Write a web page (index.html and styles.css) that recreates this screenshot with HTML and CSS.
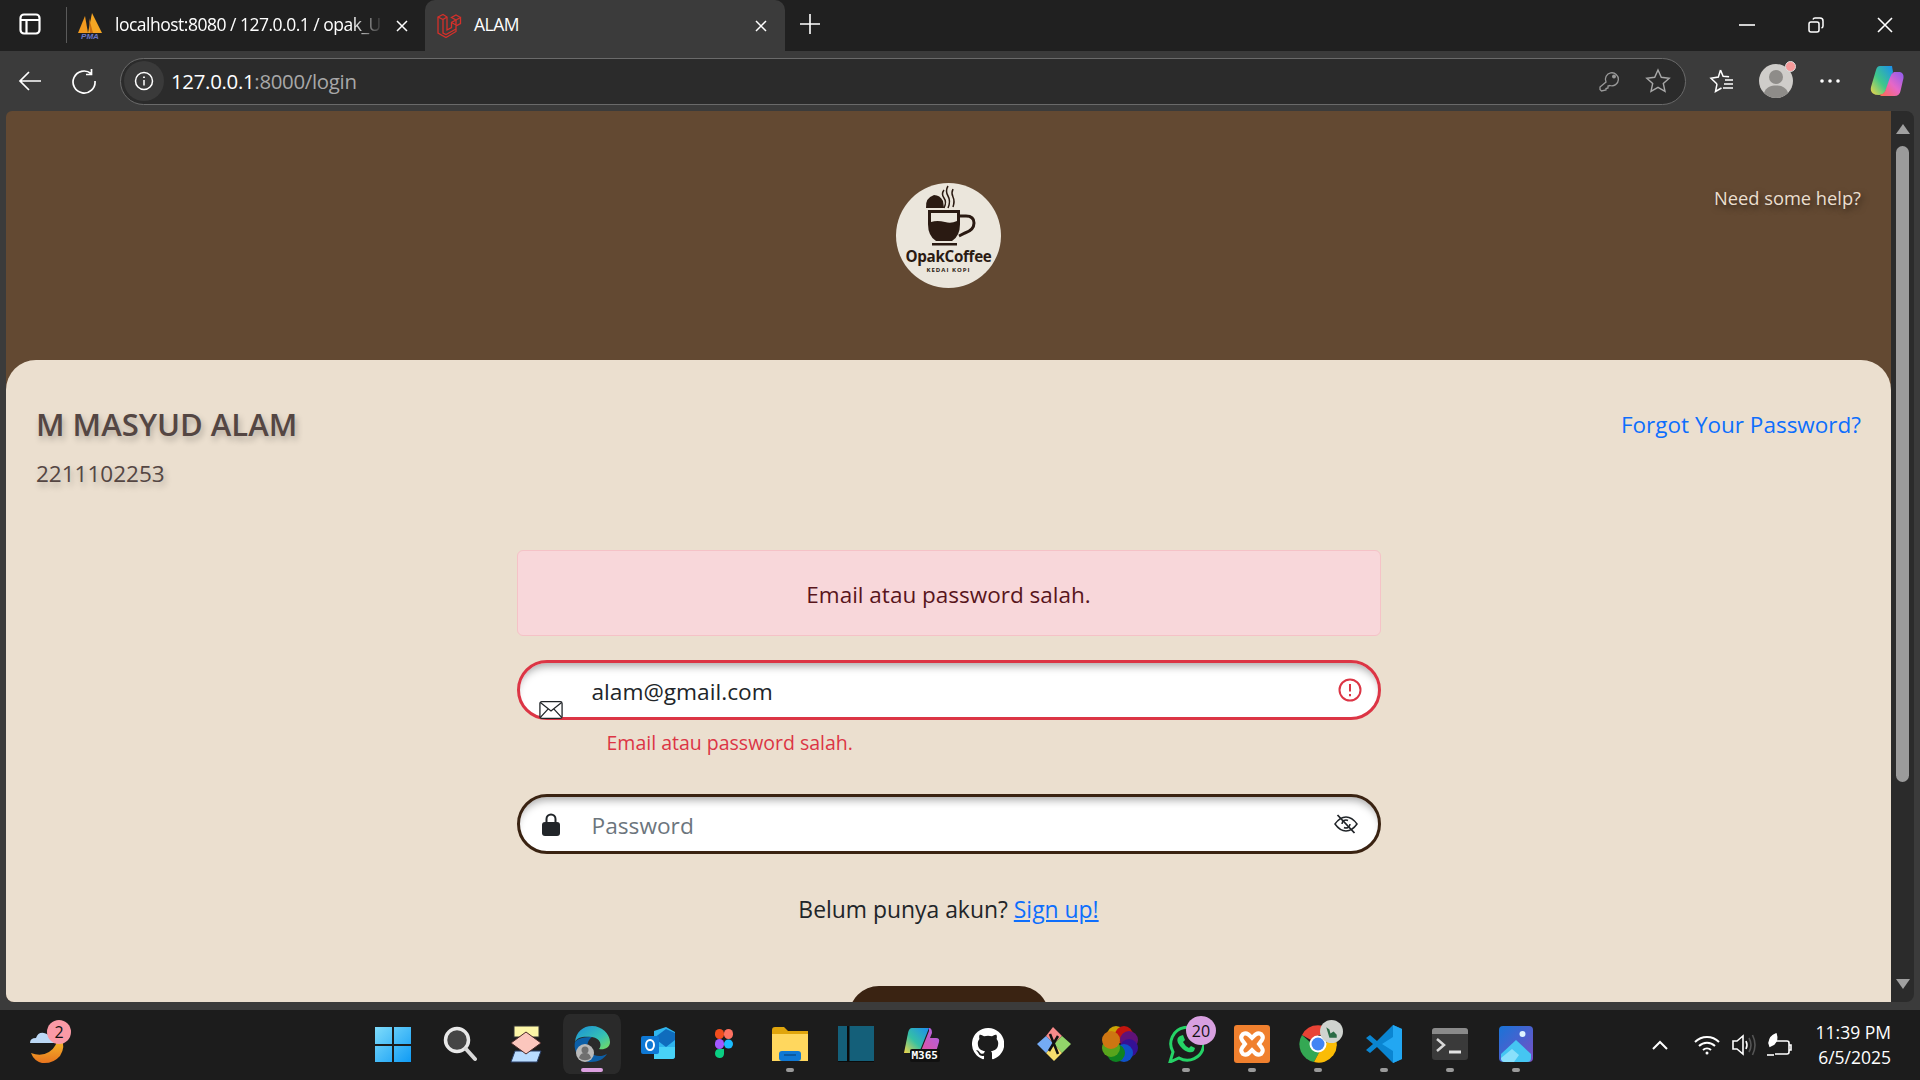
FILE: index.html
```html
<!DOCTYPE html>
<html lang="en">
<head>
  <meta charset="UTF-8" />
  <title>ALAM</title>
  <link rel="stylesheet" href="styles.css">
</head>
<body>
  <!-- Tab strip -->
  <div class="tabstrip">
    <svg class="tab-sidebar" width="22" height="22" viewBox="0 0 22 22" fill="none" stroke="#fff" stroke-width="2.200"><rect x="1.500" y="1.500" width="19" height="19" rx="3.500"/><path d="M1.500 7h19M7.500 7v13"/></svg>
    <div class="tab-sep"></div>
    <div class="tab">
      <svg width="26" height="28" viewBox="0 0 26 28"><path d="M1 21 8 4l3 17z" fill="#f29a1f"/><path d="M11 21 15 1l10 20z" fill="#f5a623"/><path d="M12 6l4 15h-3z" fill="#c96f12"/><text class="pma-text" x="13" y="27" text-anchor="middle">PMA</text></svg>
      <span class="tab-title fade">localhost:8080 / 127.0.0.1 / opak_U</span>
      <span class="tab-x"><svg width="12" height="12" viewBox="0 0 12 12" stroke="#fff" stroke-width="1.500"><path d="M1 1l10 10M11 1 1 11"/></svg></span>
    </div>
    <div class="tab active">
      <svg width="26" height="26" viewBox="0 0 26 26" fill="none" stroke="#d5302a" stroke-width="1.300"><path d="M2 4l5-2.500L11 4v13l4.500-2.500V9.500L20 7l4.500-2.500v6L20 13v5.500L10 24.500 2 20z"/><path d="M2 4l5 2.500L11 4M7 6.500V20l3 1.500 10-5.500M15.500 9.500 20 12V7M20 7l-4.500-2.500L20 2l4.500 2.500"/></svg>
      <span class="tab-title">ALAM</span>
      <span class="tab-x"><svg width="12" height="12" viewBox="0 0 12 12" stroke="#fff" stroke-width="1.500"><path d="M1 1l10 10M11 1 1 11"/></svg></span>
    </div>
    <svg class="tab-plus" width="22" height="22" viewBox="0 0 22 22" stroke="#fff" stroke-width="1.600"><path d="M11 1v20M1 11h20"/></svg>
    <div class="win-btns">
      <svg width="16" height="16" viewBox="0 0 16 16" stroke="#fff" stroke-width="1.600"><path d="M0 8h16"/></svg>
      <svg width="16" height="16" viewBox="0 0 16 16" fill="none" stroke="#fff" stroke-width="1.500"><rect x="1" y="5" width="10" height="10" rx="2"/><path d="M5 2.500Q5.500 1 7 1h5q3 0 3 3v5q0 1.500-1.500 2"/></svg>
      <svg width="16" height="16" viewBox="0 0 16 16" stroke="#fff" stroke-width="1.600"><path d="M1 1l14 14M15 1 1 15"/></svg>
    </div>
  </div>

  <!-- Address bar -->
  <div class="toolbar">
    <svg class="nav-btn" width="26" height="26" viewBox="0 0 26 26" fill="none" stroke="#fff" stroke-width="1.700"><path d="M24 13H3M12 4l-9 9 9 9"/></svg>
    <svg class="nav-btn" width="26" height="26" viewBox="0 0 26 26" fill="none" stroke="#fff" stroke-width="1.700"><path d="M20 5.500A11 11 0 1 0 24 13M20.500 1v5.500H15"/></svg>
    <div class="address">
      <span class="addr-info"><svg width="20" height="20" viewBox="0 0 20 20" fill="none" stroke="#fff" stroke-width="1.500"><circle cx="10" cy="10" r="8.500"/><path d="M10 9v5.500"/><path d="M10 5.500v1.500" stroke-width="1.800"/></svg></span>
      <span class="addr-host">127.0.0.1</span><span class="addr-path">:8000/login</span>
      <div class="addr-icons">
        <svg width="22" height="22" viewBox="0 0 22 22" fill="none" stroke="#9a9a9a" stroke-width="1.300"><path d="M8 12a6.500 6.500 0 1 1 4 3.500l-2 .5v2l-2 .5v1.500L3.500 21 2 19.500V17z"/><circle cx="16" cy="6.500" r="1.300" fill="#9a9a9a"/></svg>
        <svg width="26" height="26" viewBox="0 0 26 26" fill="none" stroke="#a8a8a8" stroke-width="1.400"><path d="M13 2l3.300 7.300 7.900.9-5.900 5.300 1.700 7.800L13 19.300 6 23.300l1.700-7.800L1.800 10.200l7.900-.9z"/></svg>
      </div>
    </div>
    <div class="tool-icons">
      <svg class="tool-fav" width="26" height="26" viewBox="0 0 26 26" fill="none" stroke="#fff" stroke-width="1.500"><path d="M11.500 2l2.600 6.300 6 .5M8 16l-1.500 7.500 6-3.500M8 16 2 10.300l7.300-1.200L11.500 2"/><path d="M16 12h8M15 16h9M14 20h10" stroke-width="1.300"/></svg>
      <span class="avatar"><svg width="34" height="34" viewBox="0 0 34 34"><circle cx="17" cy="17" r="17" fill="#cfcdca"/><circle cx="17" cy="13" r="7" fill="#8e8c89"/><path d="M5 29c2-6 7-7.500 12-7.500S27 23 29 29a17 17 0 0 1-24 0z" fill="#8e8c89"/></svg><i class="avatar-dot"></i></span>
      <svg class="tool-more" width="22" height="22" viewBox="0 0 22 22" fill="#fff"><circle cx="3" cy="11" r="1.800"/><circle cx="11" cy="11" r="1.800"/><circle cx="19" cy="11" r="1.800"/></svg>
      <svg class="tool-copilot" width="34" height="32" viewBox="0 0 34 32">
        <defs>
          <linearGradient id="cop1" x1="0" y1="1" x2="1" y2="0"><stop offset="0" stop-color="#f5d547"/><stop offset=".45" stop-color="#3fc88a"/><stop offset="1" stop-color="#1a8ef0"/></linearGradient>
          <linearGradient id="cop2" x1="0" y1="1" x2="1" y2="0"><stop offset="0" stop-color="#ff6a4d"/><stop offset=".5" stop-color="#e667c7"/><stop offset="1" stop-color="#8a5cf0"/></linearGradient>
        </defs>
        <path d="M10 1h12l1 6-7 18q-2 5-7 5-4 0-6-1.500Q0 26 1 22L6 5q1-4 4-4z" fill="url(#cop1)"/>
        <path d="M24 7h6q4 1 3.500 6l-3 13q-1 5-6 5H13q-3 0-3-1.500 3 0 5-3l5-14q1-4 4-5.500z" fill="url(#cop2)"/>
      </svg>
    </div>
  </div>

  <!-- Browser viewport -->
  <div class="viewport">
    <main class="page">
      <header class="page-head">
        <div></div>
        <svg class="logo" width="105" height="105" viewBox="0 0 105 105">
          <circle cx="52.500" cy="52.500" r="52.500" fill="#ebe6dc"/>
          <path d="M30 25q-1-10 8-13 6 0 9 6l1 7z" fill="#2a1a12"/>
          <path d="M48 7q-3 4 0 8t0 10M52 3q-3 5 0 10t0 12M57 6q-2 4 0 8t0 10" fill="none" stroke="#2a1a12" stroke-width="1.500"/>
          <path d="M32 27h32v14q0 12-8 17H40q-8-5-8-17z" fill="#2a1a12"/>
          <path d="M35 30h26v8q-6 3-12 1-8-2-14 0z" fill="#ebe6dc"/>
          <path d="M64 33h6q8 0 8 7t-9 10l-6 3" fill="none" stroke="#2a1a12" stroke-width="3"/>
          <rect x="36" y="60" width="25" height="2.500" fill="#2a1a12"/>
          <text class="logo-name" x="52.500" y="79" text-anchor="middle">OpakCoffee</text>
          <text class="logo-sub" x="52.500" y="89" text-anchor="middle">KEDAI KOPI</text>
        </svg>
        <a class="help-link">Need some help?</a>
      </header>

      <section class="card">
        <div class="card-top">
          <div>
            <h1 class="student-name">M MASYUD ALAM</h1>
            <p class="student-id">2211102253</p>
          </div>
          <a class="forgot-link">Forgot Your Password?</a>
        </div>

        <form class="login-form">
          <div class="alert">Email atau password salah.</div>

          <div class="field invalid">
            <svg class="field-icon mail" width="26" height="20" viewBox="0 0 26 20" fill="#fff" stroke="#212529" stroke-width="1.400"><rect x="1" y="1" width="24" height="18" rx="2"/><path d="M1.500 2 13 11 24.500 2M1.500 18 10 8.800M24.500 18 16 8.800" fill="none"/></svg>
            <input class="field-input" type="text" value="alam@gmail.com">
            <svg class="field-end" width="24" height="24" viewBox="0 0 24 24" fill="none" stroke="#dc3545" stroke-width="2"><circle cx="12" cy="12" r="10.500"/><path d="M12 6v7.500M12 16v2.200"/></svg>
          </div>
          <div class="field-error">Email atau password salah.</div>

          <div class="field">
            <svg class="field-icon" width="24" height="24" viewBox="0 0 24 24"><path d="M7.500 11V7a4.500 4.500 0 0 1 9 0v4" fill="none" stroke="#212529" stroke-width="2"/><rect x="3" y="10" width="18" height="14" rx="3" fill="#212529"/></svg>
            <input class="field-input" type="text" placeholder="Password">
            <svg class="field-end eye" width="24" height="20" viewBox="0 0 24 20" fill="none" stroke="#212529" stroke-width="1.500"><path d="M1 10Q6 3 12 3t11 7q-5 7-11 7T1 10z"/><path d="M8 10a4 4 0 0 1 6-3.500M16 10a4 4 0 0 1-6 3.500"/><path d="M3.500 1l17 18" stroke-width="1.800"/></svg>
          </div>

          <p class="signup">Belum punya akun? <a class="signup-link">Sign up!</a></p>
          <div class="submit"></div>
        </form>
      </section>
    </main>

    <div class="scrollbar">
      <i class="scroll-up"></i>
      <div class="scroll-thumb"></div>
      <i class="scroll-down"></i>
    </div>
  </div>

  <!-- Windows taskbar -->
  <footer class="taskbar">
    <div class="task-weather">
      <svg width="40" height="42" viewBox="0 0 40 42">
        <defs><linearGradient id="moon" x1="0" y1="0" x2="0" y2="1"><stop offset="0" stop-color="#f7c22c"/><stop offset="1" stop-color="#e8741e"/></linearGradient></defs>
        <path d="M33 14q5 10-1 19-7 8-18 7Q6 38 3 30q10 4 18-1 9-6 8-15z" fill="url(#moon)"/>
        <path d="M2 20q0-5 6-5 2-6 8-5 5 1 6 5 4 0 4 5z" fill="#bcd8f5"/>
      </svg>
      <span class="badge pink">2</span>
    </div>

    <div class="task-icons">
      <span class="task-slot"><svg width="36" height="36" viewBox="0 0 36 36"><defs><linearGradient id="win" x1="0" y1="0" x2="1" y2="1"><stop offset="0" stop-color="#7fdcfb"/><stop offset="1" stop-color="#0f9bf5"/></linearGradient></defs><path d="M0 1h17v17H0zM19 1h17v17H19zM0 20h17v16H0zM19 20h17v16H19z" fill="url(#win)"/></svg></span>
      <span class="task-slot"><svg width="34" height="36" viewBox="0 0 34 36"><circle cx="14" cy="14" r="11.500" fill="#444" stroke="#e8e8e8" stroke-width="3.500"/><path d="M23 23l9 10" stroke="#d8d8d8" stroke-width="4" stroke-linecap="round"/></svg></span>
      <span class="task-slot"><svg width="36" height="38" viewBox="0 0 36 38"><rect x="6" y="1" width="25" height="11" fill="#fdf6a8" stroke="#333"/><path d="M7 26h26l-4 11H3z" fill="#b9dcff" stroke="#2a3f66"/><path d="M18 7l15 11-15 11L3 18z" fill="#fbc6bd" stroke="#4a2a2a"/></svg></span>
      <span class="task-slot current"><svg width="38" height="38" viewBox="0 0 38 38"><defs><linearGradient id="edge" x1="0" y1="0" x2="1" y2="1"><stop offset="0" stop-color="#1a8fd8"/><stop offset=".6" stop-color="#35c1b5"/><stop offset="1" stop-color="#7ade5a"/></linearGradient></defs><path d="M2 17C3 7 10 1 19 1c10 0 18 8 18 16 0 6-6 8-11 7 3-3 2-11-7-12C10 11 4 12 2 17z" fill="url(#edge)"/><path d="M2 17c-2 10 5 20 16 20 7 0 13-3 16-8-5 3-13 3-17-2-5-6-2-12 2-15-7 0-14 1-17 5z" fill="#0c5fa8"/><circle cx="12" cy="28" r="9" fill="#b9b9b9"/><circle cx="12" cy="25" r="3.500" fill="#6f6f6f"/><path d="M6 33c1-4 3-5 6-5s5 1 6 5a9 9 0 0 1-12 0z" fill="#6f6f6f"/></svg><i class="task-dot active-dot"></i></span>
      <span class="task-slot"><svg width="36" height="36" viewBox="0 0 36 36"><path d="M14 5l12-4 9 5v24q0 3-3 3H17q-3 0-3-3z" fill="#2fb5ee"/><path d="M14 12 26 3l9 4v7L26 21z" fill="#0f6cbd"/><path d="M14 33V21l21 0v9q0 3-3 3z" fill="#48d2f7"/><rect x="1" y="10" width="18" height="18" rx="2" fill="#0f78d4"/><ellipse cx="10" cy="19" rx="4" ry="5" fill="none" stroke="#fff" stroke-width="2"/></svg></span>
      <span class="task-slot"><svg width="18" height="30" viewBox="0 0 18 30"><rect width="9" height="10" x="0" y="0" rx="4.500" fill="#f24e1e"/><rect width="9" height="10" x="9" y="0" rx="4.500" fill="#ff7262"/><rect width="9" height="10" x="0" y="10" rx="4.500" fill="#a259ff"/><circle cx="13.500" cy="15" r="4.500" fill="#1abcfe"/><path d="M4.500 20H9v5a4.500 4.500 0 1 1-4.500-5z" fill="#0acf83"/></svg></span>
      <span class="task-slot"><svg width="36" height="34" viewBox="0 0 36 34"><path d="M0 3q0-3 3-3h9l4 4h20v30H0z" fill="#e0a50c"/><path d="M0 7h36v27H0z" fill="#ffd75e"/><rect x="7" y="24" width="22" height="10" rx="3" fill="#0f78d4"/><path d="M12 28h12" stroke="#0b4f8f" stroke-width="1.500"/></svg><i class="task-dot"></i></span>
      <span class="task-slot"><svg width="36" height="36" viewBox="0 0 36 36"><rect width="36" height="36" fill="#145f79"/><rect x="9" width="2.500" height="36" fill="#0b0b0b"/><rect y="35" width="36" height="1" fill="#0b0b0b"/></svg></span>
      <span class="task-slot"><svg width="36" height="36" viewBox="0 0 36 36"><defs><linearGradient id="m365" x1="0" y1="1" x2="1" y2="0"><stop offset="0" stop-color="#f5d547"/><stop offset=".45" stop-color="#35c0a4"/><stop offset="1" stop-color="#1d8cf0"/></linearGradient><linearGradient id="m365b" x1="0" y1="1" x2="1" y2="0"><stop offset="0" stop-color="#f0508c"/><stop offset="1" stop-color="#a862ea"/></linearGradient></defs><path d="M8 2h17l-8 20q-2 5-6 5H0L4 7q1-5 4-5z" fill="url(#m365)"/><path d="M25 2q3 0 3 5l-2 5h6q4 0 3 4l-3 10q-1 4-5 4H11q4 0 6-5l8-20z" fill="url(#m365b)"/></svg><b class="m365-tag">M365</b></span>
      <span class="task-slot"><svg width="32" height="32" viewBox="0 0 16 16" fill="#fff"><path d="M8 0a8 8 0 0 0-2.530 15.590c.4.070.55-.17.55-.38v-1.340c-2.230.48-2.700-1.070-2.700-1.070-.36-.93-.89-1.170-.89-1.170-.73-.5.050-.49.050-.49.800.060 1.230.83 1.230.83.710 1.220 1.870.87 2.330.66.070-.52.280-.87.510-1.070-1.780-.2-3.640-.89-3.640-3.950 0-.87.310-1.590.820-2.150-.080-.2-.360-1.020.080-2.120 0 0 .670-.21 2.200.820a7.600 7.600 0 0 1 4 0c1.530-1.040 2.200-.82 2.200-.82.440 1.100.160 1.920.080 2.120.510.560.820 1.270.820 2.150 0 3.070-1.870 3.750-3.650 3.950.290.250.540.730.540 1.480v2.200c0 .210.150.46.550.380A8 8 0 0 0 8 0z"/></svg></span>
      <span class="task-slot"><svg width="36" height="36" viewBox="0 0 36 36"><path d="M18 18 10 10l7-9 9 9z" fill="#f98a8a"/><path d="M18 18l8-8 9 8-9 9z" fill="#92d46a"/><path d="M18 18l8 9-8 8-8-8z" fill="#f7dd6d"/><path d="M18 18l-8 9-9-9 9-8z" fill="#74abf5"/><path d="M14 8l8 20M22 10l-9 15" stroke="#111" stroke-width="2.500"/></svg></span>
      <span class="task-slot"><svg width="36" height="38" viewBox="0 0 36 38"><g opacity=".82"><circle cx="14" cy="10" r="9" fill="#f2c200"/><circle cx="22" cy="10" r="9" fill="#e8140c"/><circle cx="27" cy="15" r="9" fill="#70108c"/><circle cx="27" cy="23" r="9" fill="#3a0fb0"/><circle cx="22" cy="28" r="9" fill="#0d5ff0"/><circle cx="14" cy="28" r="9" fill="#0b9a22"/><circle cx="9" cy="23" r="9" fill="#65c21c"/><circle cx="9" cy="15" r="9" fill="#f58a10"/></g></svg></span>
      <span class="task-slot"><svg width="36" height="38" viewBox="0 0 36 38" fill="none"><path d="M2 37l3-10A16.500 16.500 0 1 1 11 33z" stroke="#25d366" stroke-width="3"/><path d="M12 11l3-1 2 5-2 2q2 4 6 6l2-2 4 2-1 3q-2 2-6 1-6-2-10-9-2-5 2-7z" fill="#25d366"/></svg><span class="badge lilac">20</span><i class="task-dot"></i></span>
      <span class="task-slot"><svg width="36" height="38" viewBox="0 0 36 38"><rect width="36" height="38" rx="3" fill="#f0802e"/><path d="M9 9q4-2 7 2l2 2 2-2q3-4 7-2 3 3 1 6l-3 4 3 4q2 3-1 6-4 2-7-2l-2-2-2 2q-3 4-7 2-3-3-1-6l3-4-3-4q-2-3 1-6z" fill="none" stroke="#fff" stroke-width="4"/></svg><i class="task-dot"></i></span>
      <span class="task-slot"><svg width="38" height="38" viewBox="0 0 38 38"><path d="M19 19 3 10A18 18 0 0 1 35 10H19z" fill="#e94335"/><path d="M3 10A18 18 0 0 0 15 37l6-11z" fill="#34a853"/><path d="M35 10A18 18 0 0 1 15 37l8-15z" fill="#fbbc05"/><circle cx="19" cy="19" r="8.500" fill="#fff"/><circle cx="19" cy="19" r="6.500" fill="#4285f4"/></svg><span class="chrome-ext"><svg width="23" height="23" viewBox="0 0 22 22"><circle cx="11" cy="11" r="11" fill="#cfd3cf"/><path d="M6 7l3 2 1 4 3-2 3 3v3H9z" fill="#2b6b45"/></svg></span><i class="task-dot"></i></span>
      <span class="task-slot"><svg width="36" height="40" viewBox="0 0 36 40"><path d="M27 1 11 17 4 11 0 14l7 6-7 6 4 3 7-6 16 16 9-4V5z" fill="#0a85d1"/><path d="M27 1l9 4v30l-9 4V27L16 20l11-7z" fill="#22a7f2"/></svg><i class="task-dot"></i></span>
      <span class="task-slot"><svg width="36" height="32" viewBox="0 0 36 32"><rect width="36" height="32" rx="3" fill="#3a3a3a"/><path d="M0 3q0-3 3-3h30q3 0 3 3v3H0z" fill="#8a8a8a"/><path d="M5 11l7 6-7 6" fill="none" stroke="#d8d8d8" stroke-width="2.500"/><path d="M17 24h12" stroke="#e4e4e4" stroke-width="3"/></svg><i class="task-dot"></i></span>
      <span class="task-slot"><svg width="34" height="36" viewBox="0 0 34 36"><defs><linearGradient id="pic" x1="0" y1="0" x2="1" y2="1"><stop offset="0" stop-color="#1874d8"/><stop offset="1" stop-color="#7a4ec4"/></linearGradient></defs><rect width="34" height="36" rx="4" fill="url(#pic)"/><circle cx="23.500" cy="8" r="3" fill="#dff3ff"/><path d="M2 28 17 14l15 14v4q0 4-4 4H6q-4 0-4-4z" fill="#45c6f2"/><path d="M2 32 13 23l7 6-5 7H6q-4 0-4-4z" fill="#8ae0fb"/></svg><i class="task-dot"></i></span>
    </div>

    <div class="tray">
      <svg class="tray-chev" width="20" height="12" viewBox="0 0 20 12" fill="none" stroke="#fff" stroke-width="2"><path d="M3 10l7-7 7 7"/></svg>
      <svg class="tray-wifi" width="26" height="22" viewBox="0 0 26 22" fill="none" stroke="#fff" stroke-width="2"><path d="M1 8a17 17 0 0 1 24 0M5 12a11.500 11.500 0 0 1 16 0M9 16a6 6 0 0 1 8 0"/><circle cx="13" cy="19" r="1.500" fill="#fff" stroke="none"/></svg>
      <svg class="tray-vol" width="26" height="24" viewBox="0 0 26 24" fill="none" stroke="#fff" stroke-width="1.600"><path d="M2 8h4l6-5v18l-6-5H2z"/><path d="M15 8q2 4 0 8" /><path d="M18 5q4 7 0 14M21.500 2q5 10 0 20" stroke="#555"/></svg>
      <svg class="tray-batt" width="26" height="26" viewBox="0 0 26 26" fill="none" stroke="#fff" stroke-width="1.600"><path d="M8 9h13q2 0 2 2v9q0 2-2 2H9"/><path d="M23 13h2v5h-2"/><path d="M3 11q1-7 7-9 2 6-2 10l-4 2z" fill="#fff"/><path d="M1 23h7"/></svg>
      <div class="clock"><span>11:39 PM</span><span>6/5/2025</span></div>
    </div>
  </footer>
</body>
</html>
```

FILE: styles.css
```css
html, body {
  margin: 0;
  padding: 0;
  height: 100%;
  overflow: hidden;
}

body {
  display: flex;
  flex-direction: column;
  background: #3b3b3b;
  font-family: 'Open Sans', 'Noto Sans', sans-serif;
  color: #212529;
}

/* Tab strip */
.tabstrip {
  height: 51px;
  flex: none;
  display: flex;
  align-items: stretch;
  background: #202020;
  color: #fff;
}

.tab-sidebar {
  margin: 13px 25px 0 19px;
}

.tab-sep {
  width: 1px;
  height: 36px;
  margin-top: 7px;
  background: #5a5a5a;
}

.tab {
  display: flex;
  align-items: center;
  width: 358px;
  padding: 0 17px 0 10px;
  box-sizing: border-box;
}

.tab.active {
  width: 360px;
  padding-left: 11px;
  padding-right: 18px;
  background: #3b3b3b;
  border-radius: 10px 10px 0 0;
}

.tab-title {
  flex: 1;
  min-width: 0;
  margin: -4px 0 0 12px;
  font-size: 17.500px;
  letter-spacing: -0.5px;
  white-space: nowrap;
}

.tab-title.fade {
  -webkit-mask-image: linear-gradient(to right, #000 88%, transparent);
  mask-image: linear-gradient(to right, #000 88%, transparent);
}

.pma-text {
  font: italic 700 8px 'Liberation Sans', sans-serif;
  fill: #6b78c8;
}

.tab-x {
  margin-left: 12px;
  display: flex;
}

.tab-plus {
  margin: 13px 0 0 14px;
}

.win-btns {
  margin-left: auto;
  display: flex;
  gap: 53px;
  padding: 17px 27px 0 0;
}

/* Address bar */
.toolbar {
  height: 60px;
  flex: none;
  display: flex;
  align-items: center;
  padding-left: 17px;
  background: #3b3b3b;
  box-sizing: border-box;
}

.nav-btn {
  margin-right: 28px;
}

.nav-btn + .nav-btn {
  margin-right: 23px;
}

.address {
  width: 1566px;
  height: 47px;
  box-sizing: border-box;
  display: flex;
  align-items: center;
  padding: 0 9px 0 3px;
  background: #2b2b2b;
  border: 1.5px solid #6a6a6a;
  border-radius: 24px;
  font-size: 20.400px;
  letter-spacing: -0.3px;
}

.addr-info {
  width: 40px;
  height: 40px;
  margin-right: 7px;
  display: flex;
  align-items: center;
  justify-content: center;
  background: #3a3a3a;
  border-radius: 50%;
}

.addr-host { color: #fff; }
.addr-path { color: #a8a8a8; }

.addr-icons {
  margin-left: auto;
  display: flex;
  align-items: center;
  gap: 25px;
  padding-right: 5px;
}

.tool-icons {
  flex: 1;
  display: flex;
  align-items: center;
  padding-left: 23px;
}

.tool-fav { margin-right: 24px; }
.tool-more { margin-left: 26px; }
.tool-copilot { margin-left: 29px; }

.avatar {
  position: relative;
  display: flex;
}

.avatar-dot {
  position: absolute;
  top: -3px;
  right: -3px;
  width: 9px;
  height: 9px;
  background: #f79a9a;
  border: 1px solid #ddd;
  border-radius: 50%;
}

/* Browser viewport */
.viewport {
  flex: 1;
  min-height: 0;
  display: flex;
  padding: 0 6px 8px;
}

.page {
  flex: 1;
  min-width: 0;
  overflow: hidden;
  display: flex;
  flex-direction: column;
  background: #634932;
  border-radius: 6px 0 0 8px;
}

.page-head {
  height: 249px;
  flex: none;
  display: grid;
  grid-template-columns: 1fr 105px 1fr;
  align-items: center;
}

.logo {
  display: block;
}

.logo-name {
  font: 700 15.200px 'Open Sans', sans-serif;
  letter-spacing: -0.3px;
  fill: #2a1a12;
}

.logo-sub {
  font: 700 6px 'Open Sans', sans-serif;
  letter-spacing: 1px;
  fill: #2a1a12;
}

.help-link {
  justify-self: end;
  align-self: start;
  margin: 74px 30px 0 0;
  font-size: 18.300px;
  line-height: 26px;
  color: #ebdfcf;
  text-shadow: 2px 3px 6px rgba(0, 0, 0, 0.55);
}

.card {
  flex: 1;
  padding: 46px 30px 0;
  background: #ebdfcf;
  border-radius: 30px 30px 0 0;
}

.card-top {
  display: flex;
  justify-content: space-between;
  align-items: flex-start;
}

.student-name {
  margin: 0;
  font-size: 31px;
  line-height: 36px;
  font-weight: 600;
  color: #544643;
  text-shadow: 2px 4px 6px rgba(0, 0, 0, 0.25);
}

.student-id {
  margin: 16px 0 0;
  font-size: 22.500px;
  line-height: 32px;
  color: #544643;
  text-shadow: 2px 4px 6px rgba(0, 0, 0, 0.25);
}

.forgot-link {
  margin-top: 1px;
  font-size: 22.500px;
  line-height: 36px;
  color: #0d6efd;
}

.login-form {
  width: 864px;
  margin: 60px auto 0;
}

.alert {
  height: 86px;
  box-sizing: border-box;
  margin-bottom: 24px;
  padding-top: 2px;
  display: flex;
  align-items: center;
  justify-content: center;
  background: #f8d7da;
  border: 1px solid #f5c2c7;
  border-radius: 6px;
  font-size: 22.500px;
  color: #58151c;
}

.field {
  height: 60px;
  box-sizing: border-box;
  display: flex;
  align-items: center;
  padding: 0 16px 0 19px;
  background: #fff;
  border: 3px solid #3a2312;
  border-radius: 30px;
  box-shadow: inset 0 8px 8px -5px rgba(0, 0, 0, 0.35);
}

.field.invalid {
  border-color: #dc3545;
}

.field-icon {
  flex: none;
  width: 24px;
}

.field-icon.mail {
  align-self: flex-end;
  margin-bottom: -3px;
}

.field-input {
  flex: 1;
  min-width: 0;
  margin-left: 29px;
  padding: 2px 0 0;
  border: none;
  outline: none;
  background: transparent;
  font-family: inherit;
  font-size: 22.700px;
  color: #212529;
}

.field-input::placeholder {
  color: #6c757d;
  opacity: 1;
}

.field-end {
  flex: none;
}

.field-end.eye {
  margin-right: 4px;
}

.field-error {
  margin: 9px 0 0 90px;
  height: 65px;
  font-size: 19.500px;
  line-height: 28px;
  color: #dc3545;
}

.signup {
  margin: 40px 0 0;
  text-align: center;
  font-size: 22.900px;
  line-height: 32px;
}

.signup-link {
  color: #0d6efd;
  text-decoration: underline;
}

.submit {
  width: 200px;
  height: 60px;
  margin: 60px auto 0;
  background: #3a2312;
  border-radius: 30px;
}

/* Fake scrollbar */
.scrollbar {
  width: 23px;
  flex: none;
  display: flex;
  flex-direction: column;
  align-items: center;
  background: #2b2b2b;
  border-radius: 0 8px 8px 0;
}

.scroll-up, .scroll-down {
  width: 0;
  height: 0;
  border-left: 7px solid transparent;
  border-right: 7px solid transparent;
}

.scroll-up {
  margin-top: 13px;
  border-bottom: 10px solid #a0a0a0;
}

.scroll-down {
  margin-top: auto;
  margin-bottom: 13px;
  border-top: 10px solid #a0a0a0;
}

.scroll-thumb {
  width: 13px;
  height: 636px;
  margin-top: 12px;
  background: #9b9b9b;
  border-radius: 7px;
}

/* Windows taskbar */
.taskbar {
  height: 70px;
  flex: none;
  display: flex;
  align-items: center;
  background: #1c1c1c;
  color: #fff;
}

.task-weather {
  position: relative;
  width: 361px;
  height: 70px;
  flex: none;
  box-sizing: border-box;
  padding: 13px 0 0 28px;
}

.task-icons {
  display: flex;
}

.task-slot {
  position: relative;
  width: 66px;
  height: 60px;
  display: flex;
  align-items: center;
  justify-content: center;
  box-sizing: border-box;
  margin-top: -2px;
}

.task-slot:first-child {
  justify-content: flex-start;
  padding-left: 14px;
}

.task-slot.current {
  background: #2a2a2a;
  background-clip: padding-box;
  border-left: 4px solid transparent;
  border-right: 4px solid transparent;
  border-radius: 10px;
}

.task-dot {
  position: absolute;
  left: 50%;
  bottom: 2px;
  width: 8px;
  height: 4px;
  margin-left: -4px;
  background: #9a9a9a;
  border-radius: 2px;
}

.task-dot.active-dot {
  width: 22px;
  margin-left: -11px;
  background: #dca0e0;
}

.badge {
  position: absolute;
  display: flex;
  align-items: center;
  justify-content: center;
  font-size: 16px;
  color: #111;
  border-radius: 50%;
}

.badge.pink {
  top: 10px;
  left: 47px;
  width: 24px;
  height: 24px;
  background: #fb9aa6;
}

.badge.lilac {
  top: 2px;
  right: 3px;
  width: 30px;
  height: 29px;
  background: #d8a0e0;
}

.m365-tag {
  position: absolute;
  right: 15px;
  bottom: 12px;
  padding: 0 2px;
  font: 700 11px 'DejaVu Sans Mono', monospace;
  color: #fff;
  background: #111;
  border-radius: 2px;
}

.chrome-ext {
  position: absolute;
  top: 6px;
  right: 8px;
  display: flex;
}

.tray {
  flex: 1;
  display: flex;
  align-items: center;
  padding: 0 29px 0 101px;
}

.tray-chev { margin-right: 24px; }
.tray-wifi { margin-right: 11px; }
.tray-vol { margin-right: 9px; }

.clock {
  margin-left: auto;
  display: flex;
  flex-direction: column;
  align-items: flex-end;
  font-size: 17.500px;
  line-height: 25px;
}
```
